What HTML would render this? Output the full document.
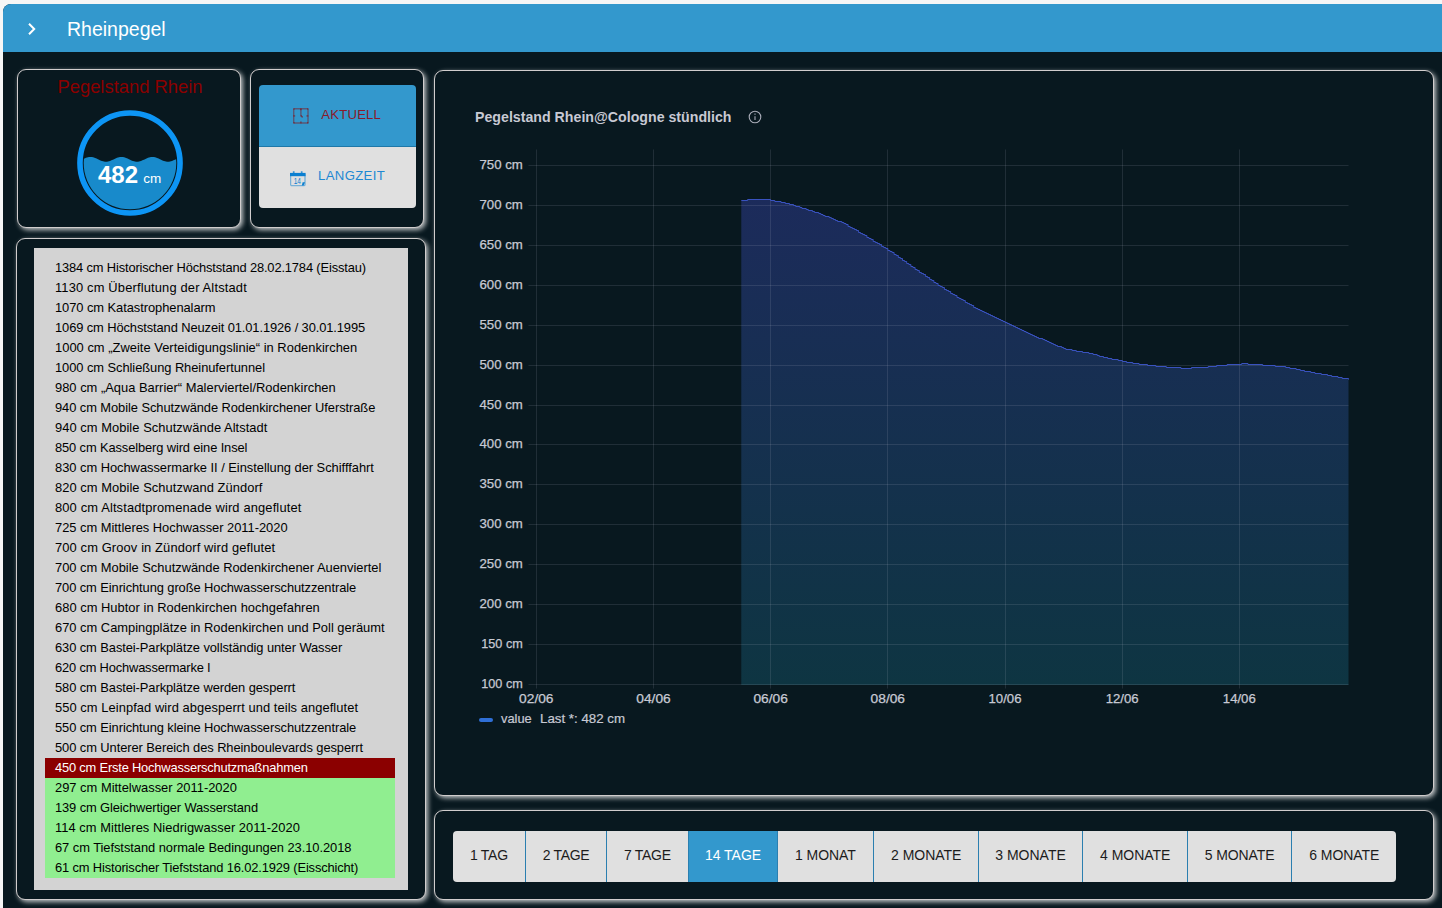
<!DOCTYPE html>
<html lang="de"><head><meta charset="utf-8"><title>Rheinpegel</title>
<style>
html,body{margin:0;padding:0}
body{width:1442px;height:908px;overflow:hidden;background:#f6f6f6;position:relative;font-family:"Liberation Sans",sans-serif}
.app{position:absolute;left:3px;top:4px;width:1445px;height:910px;background:#08181f;border-top-left-radius:8px;overflow:hidden}
.hdr{position:absolute;left:0;top:0;right:0;height:48px;background:#3398cd}
.hdr .t{position:absolute;left:64px;top:0;line-height:50px;color:#fff;font-size:19.5px}
.panel{position:absolute;box-sizing:border-box;border:1px solid #d1cdcd;border-radius:9px;background:#08181f;box-shadow:2px 2px 5px rgba(255,255,255,.75)}
.pt{position:absolute;left:2px;right:0;top:5px;text-align:center;color:#8b0000;font-size:18.4px;line-height:24px}
.list{position:absolute;left:17px;top:9px;width:374.4px;height:642px;background:#d3d3d3;font-size:12.9px;line-height:20px;color:#000}
.list div{margin:0 13px 0 11px;padding-left:10px;height:20px;white-space:nowrap}
.list div:first-child{margin-top:10px}
.list .r{background:#8b0000;color:#fff}
.list .g{background:#90ee90}
.chart{position:absolute;left:-1px;top:-1px}
.ax{font-size:12.4px;stroke:#c7c9d3;stroke-width:.25px;fill:#c7c9d3;font-family:"Liberation Sans",sans-serif}
.lg{font-size:12.4px;stroke:#c7c9d3;stroke-width:.2px;fill:#c7c9d3;font-family:"Liberation Sans",sans-serif}
.ttl{font-size:14px;font-weight:bold;fill:#c7c9d3;font-family:"Liberation Sans",sans-serif}
.tb{position:absolute;top:20px;height:51px;line-height:48.5px;box-sizing:border-box;background:#e0e0e0;color:#1c1c1c;text-align:left;font-size:14px;border-left:1px solid #2b7fb0;white-space:nowrap}
.tb.first{border-left:none;border-radius:4px 0 0 4px}
.tb.last{border-radius:0 4px 4px 0}
.tb.act{background:#3398cd;color:#fff}
.vb{position:absolute;left:8px;width:157px;box-sizing:border-box;font-size:13.2px;white-space:nowrap}
.vb span{position:absolute}
</style></head><body>
<div class="app">
<div class="hdr"><svg style="position:absolute;left:20.7px;top:17px" width="16" height="16" viewBox="0 0 16 16"><path d="M5,2.8L10.2,8L5,13.2" fill="none" stroke="#fff" stroke-width="2"/></svg><div class="t">Rheinpegel</div></div>
</div>

<div class="panel" style="left:17px;top:69px;width:224px;height:159px">
<div class="pt">Pegelstand Rhein</div>
<svg style="position:absolute;left:57.1px;top:37.8px" width="110" height="110" viewBox="-55 -55 110 110">
<defs><clipPath id="cc"><circle r="46.3"/></clipPath></defs>
<circle r="50.05" fill="none" stroke="#0d95f5" stroke-width="5.6"/>
<path clip-path="url(#cc)" d="M-50,-2.45L-49,-2.88L-48,-3.34L-47,-3.82L-46,-4.29L-45,-4.73L-44,-5.13L-43,-5.46L-42,-5.73L-41,-5.91L-40,-5.99L-39,-5.98L-38,-5.88L-37,-5.68L-36,-5.40L-35,-5.05L-34,-4.64L-33,-4.19L-32,-3.72L-31,-3.25L-30,-2.79L-29,-2.37L-28,-2.00L-27,-1.69L-26,-1.47L-25,-1.34L-24,-1.30L-23,-1.36L-22,-1.51L-21,-1.75L-20,-2.07L-19,-2.45L-18,-2.88L-17,-3.34L-16,-3.82L-15,-4.29L-14,-4.73L-13,-5.13L-12,-5.46L-11,-5.73L-10,-5.91L-9,-5.99L-8,-5.98L-7,-5.88L-6,-5.68L-5,-5.40L-4,-5.05L-3,-4.64L-2,-4.19L-1,-3.72L0,-3.25L1,-2.79L2,-2.37L3,-2.00L4,-1.69L5,-1.47L6,-1.34L7,-1.30L8,-1.36L9,-1.51L10,-1.75L11,-2.07L12,-2.45L13,-2.88L14,-3.34L15,-3.82L16,-4.29L17,-4.73L18,-5.13L19,-5.46L20,-5.73L21,-5.91L22,-5.99L23,-5.98L24,-5.88L25,-5.68L26,-5.40L27,-5.05L28,-4.64L29,-4.19L30,-3.72L31,-3.25L32,-2.79L33,-2.37L34,-2.00L35,-1.69L36,-1.47L37,-1.34L38,-1.30L39,-1.36L40,-1.51L41,-1.75L42,-2.07L43,-2.45L44,-2.88L45,-3.34L46,-3.82L47,-4.29L48,-4.73L49,-5.13L50,-5.46V50H-50Z" fill="#188acb"/>
<text x="-12" y="20.2" text-anchor="middle" font-size="24" font-weight="bold" fill="#fff" font-family="Liberation Sans, sans-serif">482</text>
<text x="22.2" y="20.2" text-anchor="middle" font-size="13.5" fill="#fff" font-family="Liberation Sans, sans-serif">cm</text>
</svg>
</div>

<div class="panel" style="left:250px;top:69px;width:174px;height:159px">
<div class="vb" style="top:15px;height:62px;background:#3398cd;color:#8b1a2b;border-radius:4px 4px 0 0;border-bottom:1px solid #1f78a8"><svg style="position:absolute;left:34.2px;top:23.2px" width="16" height="16" viewBox="0 0 16 16"><g fill="none" stroke="rgba(139,0,0,.42)" stroke-width="1.4"><rect x="0.7" y="0.7" width="14.3" height="14.3" rx="0.8"/><path d="M7.9,1V7.6L9.4,9.1"/></g><g fill="rgba(139,0,0,.45)"><rect x="0.2" y="0.2" width="1.5" height="1.5"/><rect x="14" y="0.2" width="1.5" height="1.5"/><rect x="0.2" y="14" width="1.5" height="1.5"/><rect x="14" y="14" width="1.5" height="1.5"/><rect x="7.1" y="0.2" width="1.6" height="2"/><rect x="7.1" y="13.4" width="1.6" height="2"/><rect x="0.2" y="7.1" width="2" height="1.6"/><rect x="13.4" y="7.1" width="2" height="1.6"/><circle cx="8.2" cy="7.9" r=".8"/><circle cx="9.3" cy="9" r=".8"/></g></svg><span style="left:62.3px;top:21.6px;line-height:16px;letter-spacing:.17px">AKTUELL</span></div>
<div class="vb" style="top:77px;height:61px;background:#e0e0e0;color:#1e88d2;border-radius:0 0 4px 4px"><svg style="position:absolute;left:31.3px;top:24px" width="16" height="16" viewBox="0 0 16 16"><rect x="0.6" y="3" width="14.4" height="11.6" rx="1.2" fill="none" stroke="rgba(11,127,208,.5)" stroke-width="1.3"/><path d="M0,1.9H15.6V5.2H0Z" fill="#0b7fd0"/><path d="M3.7,0.2V2.2M11.7,0.2V2.2" stroke="#0b7fd0" stroke-width="1.7" fill="none" opacity=".8"/><path d="M15,11.2H12.6L11.8,14.4H13.6Z" fill="#0b7fd0"/><text x="7.3" y="13.3" font-size="8.6" text-anchor="middle" fill="#0b7fd0" font-family="Liberation Sans, sans-serif" textLength="7.2" lengthAdjust="spacingAndGlyphs">14</text></svg><span style="left:59px;top:21.4px;line-height:16px;letter-spacing:.33px">LANGZEIT</span></div>
</div>

<div class="panel" style="left:16px;top:238px;width:410px;height:662px">
<div class="list">
<div style="letter-spacing:-0.151px">1384 cm Historischer Höchststand 28.02.1784 (Eisstau)</div>
<div style="letter-spacing:0.159px">1130 cm Überflutung der Altstadt</div>
<div style="letter-spacing:-0.061px">1070 cm Katastrophenalarm</div>
<div style="letter-spacing:-0.103px">1069 cm Höchststand Neuzeit 01.01.1926 / 30.01.1995</div>
<div style="letter-spacing:0.025px">1000 cm „Zweite Verteidigungslinie“ in Rodenkirchen</div>
<div style="letter-spacing:-0.064px">1000 cm Schließung Rheinufertunnel</div>
<div style="letter-spacing:0.012px">980 cm „Aqua Barrier“ Malerviertel/Rodenkirchen</div>
<div style="letter-spacing:-0.071px">940 cm Mobile Schutzwände Rodenkirchener Uferstraße</div>
<div style="letter-spacing:0.052px">940 cm Mobile Schutzwände Altstadt</div>
<div style="letter-spacing:-0.123px">850 cm Kasselberg wird eine Insel</div>
<div style="letter-spacing:-0.030px">830 cm Hochwassermarke II / Einstellung der Schifffahrt</div>
<div style="letter-spacing:0.054px">820 cm Mobile Schutzwand Zündorf</div>
<div style="letter-spacing:0.142px">800 cm Altstadtpromenade wird angeflutet</div>
<div style="letter-spacing:-0.021px">725 cm Mittleres Hochwasser 2011-2020</div>
<div style="letter-spacing:0.123px">700 cm Groov in Zündorf wird geflutet</div>
<div style="letter-spacing:-0.009px">700 cm Mobile Schutzwände Rodenkirchener Auenviertel</div>
<div style="letter-spacing:-0.084px">700 cm Einrichtung große Hochwasserschutzzentrale</div>
<div style="letter-spacing:0.026px">680 cm Hubtor in Rodenkirchen hochgefahren</div>
<div style="letter-spacing:-0.000px">670 cm Campingplätze in Rodenkirchen und Poll geräumt</div>
<div style="letter-spacing:-0.082px">630 cm Bastei-Parkplätze vollständig unter Wasser</div>
<div style="letter-spacing:-0.177px">620 cm Hochwassermarke I</div>
<div style="letter-spacing:-0.082px">580 cm Bastei-Parkplätze werden gesperrt</div>
<div style="letter-spacing:0.068px">550 cm Leinpfad wird abgesperrt und teils angeflutet</div>
<div style="letter-spacing:-0.082px">550 cm Einrichtung kleine Hochwasserschutzzentrale</div>
<div style="letter-spacing:-0.072px">500 cm Unterer Bereich des Rheinboulevards gesperrt</div>
<div class="r" style="letter-spacing:-0.194px">450 cm Erste Hochwasserschutzmaßnahmen</div>
<div class="g" style="letter-spacing:0.005px">297 cm Mittelwasser 2011-2020</div>
<div class="g" style="letter-spacing:-0.109px">139 cm Gleichwertiger Wasserstand</div>
<div class="g" style="letter-spacing:0.046px">114 cm Mittleres Niedrigwasser 2011-2020</div>
<div class="g" style="letter-spacing:-0.050px">67 cm Tiefststand normale Bedingungen 23.10.2018</div>
<div class="g" style="letter-spacing:-0.144px">61 cm Historischer Tiefststand 16.02.1929 (Eisschicht)</div>
</div>
</div>

<div class="panel" style="left:434px;top:70px;width:1000px;height:726px">
<svg class="chart" width="1000" height="725" viewBox="434 70 1000 725">
<defs><linearGradient id="g" gradientUnits="userSpaceOnUse" x1="0" y1="199" x2="0" y2="685"><stop offset="0" stop-color="#1c2b5b"/><stop offset="1" stop-color="#0e3542"/></linearGradient></defs>
<path d="M741.3,200.5H747.6V199.5H770.6V200.5H774.8V201.5H781.1V202.5H785.3V203.5H789.5V204.5H793.6V205.5H795.7V206.5H799.9V207.5H802.0V208.5H806.2V209.5H808.3V210.5H812.5V211.5H814.6V212.5H818.8V213.5H820.9V214.5H823.0V215.5H825.1V216.5H829.2V217.5H831.3V218.5H833.4V219.5H835.5V220.5H837.6V221.5H841.8V222.5H843.9V223.5H846.0V224.5H848.1V226.5H850.2V227.5H852.3V228.5H854.4V229.5H856.5V230.5H858.6V232.5H860.6V233.5H862.7V234.5H864.8V235.5H866.9V237.5H869.0V238.5H871.1V239.5H873.2V241.5H875.3V242.5H877.4V243.5H879.5V244.5H881.6V246.5H883.7V247.5H885.8V248.5H887.9V250.5H890.0V251.5H892.1V252.5H894.1V254.5H896.2V255.5H898.3V257.5H900.4V258.5H902.5V260.5H904.6V261.5H906.7V263.5H908.8V264.5H910.9V266.5H913.0V267.5H915.1V269.5H917.2V270.5H919.3V272.5H921.4V273.5H923.5V274.5H925.6V276.5H927.6V277.5H929.7V279.5H931.8V280.5H933.9V282.5H936.0V283.5H938.1V285.5H940.2V286.5H942.3V287.5H944.4V289.5H946.5V290.5H948.6V291.5H950.7V293.5H952.8V294.5H954.9V295.5H957.0V297.5H959.1V298.5H961.1V299.5H963.2V300.5H965.3V302.5H967.4V303.5H969.5V304.5H971.6V305.5H973.7V307.5H975.8V308.5H977.9V309.5H980.0V310.5H982.1V311.5H984.2V312.5H986.3V313.5H988.4V314.5H990.5V315.5H992.6V316.5H994.6V317.5H996.7V318.5H998.8V319.5H1000.9V320.5H1003.0V321.5H1005.1V322.5H1007.2V323.5H1009.3V324.5H1011.4V325.5H1013.5V326.5H1015.6V327.5H1017.7V328.5H1019.8V329.5H1021.9V330.5H1024.0V331.5H1026.1V332.5H1028.1V333.5H1030.2V334.5H1032.3V335.5H1034.4V336.5H1036.5V337.5H1038.6V338.5H1042.8V339.5H1044.9V340.5H1047.0V341.5H1049.1V342.5H1051.2V343.5H1053.3V344.5H1055.4V345.5H1057.5V346.5H1061.7V347.5H1063.7V348.5H1065.8V349.5H1072.1V350.5H1076.3V351.5H1082.6V352.5H1088.9V353.5H1093.1V354.5H1097.2V355.5H1099.3V356.5H1103.5V357.5H1107.7V358.5H1111.9V359.5H1118.2V360.5H1122.4V361.5H1126.6V362.5H1132.8V363.5H1139.1V364.5H1147.5V365.5H1155.9V366.5H1166.3V367.5H1181.0V368.5H1191.5V367.5H1208.2V366.5H1216.6V365.5H1227.1V364.5H1241.7V363.5H1248.0V364.5H1262.7V365.5H1275.2V366.5H1285.7V367.5H1289.9V368.5H1296.2V369.5H1300.3V370.5H1304.5V371.5H1310.8V372.5H1315.0V373.5H1321.3V374.5H1327.6V375.5H1331.7V376.5H1338.0V377.5H1342.2V378.5H1348.5V379.5H1348.5V685H741.3Z" fill="url(#g)"/>
<path d="M528.5,684.5H1348.5M528.5,644.5H1348.5M528.5,604.5H1348.5M528.5,564.5H1348.5M528.5,524.5H1348.5M528.5,484.5H1348.5M528.5,444.5H1348.5M528.5,405.5H1348.5M528.5,365.5H1348.5M528.5,325.5H1348.5M528.5,285.5H1348.5M528.5,245.5H1348.5M528.5,205.5H1348.5M528.5,165.5H1348.5M536.5,149.5V688.5M653.5,149.5V688.5M770.5,149.5V688.5M887.5,149.5V688.5M1005.5,149.5V688.5M1122.5,149.5V688.5M1239.5,149.5V688.5" stroke="rgba(204,204,220,0.13)" stroke-width="1" fill="none"/>
<path d="M741.3,200.5H747.6V199.5H770.6V200.5H774.8V201.5H781.1V202.5H785.3V203.5H789.5V204.5H793.6V205.5H795.7V206.5H799.9V207.5H802.0V208.5H806.2V209.5H808.3V210.5H812.5V211.5H814.6V212.5H818.8V213.5H820.9V214.5H823.0V215.5H825.1V216.5H829.2V217.5H831.3V218.5H833.4V219.5H835.5V220.5H837.6V221.5H841.8V222.5H843.9V223.5H846.0V224.5H848.1V226.5H850.2V227.5H852.3V228.5H854.4V229.5H856.5V230.5H858.6V232.5H860.6V233.5H862.7V234.5H864.8V235.5H866.9V237.5H869.0V238.5H871.1V239.5H873.2V241.5H875.3V242.5H877.4V243.5H879.5V244.5H881.6V246.5H883.7V247.5H885.8V248.5H887.9V250.5H890.0V251.5H892.1V252.5H894.1V254.5H896.2V255.5H898.3V257.5H900.4V258.5H902.5V260.5H904.6V261.5H906.7V263.5H908.8V264.5H910.9V266.5H913.0V267.5H915.1V269.5H917.2V270.5H919.3V272.5H921.4V273.5H923.5V274.5H925.6V276.5H927.6V277.5H929.7V279.5H931.8V280.5H933.9V282.5H936.0V283.5H938.1V285.5H940.2V286.5H942.3V287.5H944.4V289.5H946.5V290.5H948.6V291.5H950.7V293.5H952.8V294.5H954.9V295.5H957.0V297.5H959.1V298.5H961.1V299.5H963.2V300.5H965.3V302.5H967.4V303.5H969.5V304.5H971.6V305.5H973.7V307.5H975.8V308.5H977.9V309.5H980.0V310.5H982.1V311.5H984.2V312.5H986.3V313.5H988.4V314.5H990.5V315.5H992.6V316.5H994.6V317.5H996.7V318.5H998.8V319.5H1000.9V320.5H1003.0V321.5H1005.1V322.5H1007.2V323.5H1009.3V324.5H1011.4V325.5H1013.5V326.5H1015.6V327.5H1017.7V328.5H1019.8V329.5H1021.9V330.5H1024.0V331.5H1026.1V332.5H1028.1V333.5H1030.2V334.5H1032.3V335.5H1034.4V336.5H1036.5V337.5H1038.6V338.5H1042.8V339.5H1044.9V340.5H1047.0V341.5H1049.1V342.5H1051.2V343.5H1053.3V344.5H1055.4V345.5H1057.5V346.5H1061.7V347.5H1063.7V348.5H1065.8V349.5H1072.1V350.5H1076.3V351.5H1082.6V352.5H1088.9V353.5H1093.1V354.5H1097.2V355.5H1099.3V356.5H1103.5V357.5H1107.7V358.5H1111.9V359.5H1118.2V360.5H1122.4V361.5H1126.6V362.5H1132.8V363.5H1139.1V364.5H1147.5V365.5H1155.9V366.5H1166.3V367.5H1181.0V368.5H1191.5V367.5H1208.2V366.5H1216.6V365.5H1227.1V364.5H1241.7V363.5H1248.0V364.5H1262.7V365.5H1275.2V366.5H1285.7V367.5H1289.9V368.5H1296.2V369.5H1300.3V370.5H1304.5V371.5H1310.8V372.5H1315.0V373.5H1321.3V374.5H1327.6V375.5H1331.7V376.5H1338.0V377.5H1342.2V378.5H1348.5V379.5H1348.5" stroke="#3e58cd" stroke-width="1" fill="none" stroke-opacity=".9"/>
<text class="ax" x="522.8" y="688.0" text-anchor="end" textLength="41.5" lengthAdjust="spacingAndGlyphs">100 cm</text>
<text class="ax" x="522.8" y="648.0" text-anchor="end" textLength="41.5" lengthAdjust="spacingAndGlyphs">150 cm</text>
<text class="ax" x="522.8" y="608.0" text-anchor="end" textLength="43.3" lengthAdjust="spacingAndGlyphs">200 cm</text>
<text class="ax" x="522.8" y="568.0" text-anchor="end" textLength="43.3" lengthAdjust="spacingAndGlyphs">250 cm</text>
<text class="ax" x="522.8" y="528.0" text-anchor="end" textLength="43.3" lengthAdjust="spacingAndGlyphs">300 cm</text>
<text class="ax" x="522.8" y="488.0" text-anchor="end" textLength="43.3" lengthAdjust="spacingAndGlyphs">350 cm</text>
<text class="ax" x="522.8" y="448.0" text-anchor="end" textLength="43.3" lengthAdjust="spacingAndGlyphs">400 cm</text>
<text class="ax" x="522.8" y="409.0" text-anchor="end" textLength="43.3" lengthAdjust="spacingAndGlyphs">450 cm</text>
<text class="ax" x="522.8" y="369.0" text-anchor="end" textLength="43.3" lengthAdjust="spacingAndGlyphs">500 cm</text>
<text class="ax" x="522.8" y="329.0" text-anchor="end" textLength="43.3" lengthAdjust="spacingAndGlyphs">550 cm</text>
<text class="ax" x="522.8" y="289.0" text-anchor="end" textLength="43.3" lengthAdjust="spacingAndGlyphs">600 cm</text>
<text class="ax" x="522.8" y="249.0" text-anchor="end" textLength="43.3" lengthAdjust="spacingAndGlyphs">650 cm</text>
<text class="ax" x="522.8" y="209.0" text-anchor="end" textLength="43.3" lengthAdjust="spacingAndGlyphs">700 cm</text>
<text class="ax" x="522.8" y="169.0" text-anchor="end" textLength="43.3" lengthAdjust="spacingAndGlyphs">750 cm</text>
<text class="ax" x="536.3" y="703.2" text-anchor="middle" textLength="34.4" lengthAdjust="spacingAndGlyphs">02/06</text>
<text class="ax" x="653.5" y="703.2" text-anchor="middle" textLength="34.4" lengthAdjust="spacingAndGlyphs">04/06</text>
<text class="ax" x="770.6" y="703.2" text-anchor="middle" textLength="34.4" lengthAdjust="spacingAndGlyphs">06/06</text>
<text class="ax" x="887.8" y="703.2" text-anchor="middle" textLength="34.4" lengthAdjust="spacingAndGlyphs">08/06</text>
<text class="ax" x="1005.0" y="703.2" text-anchor="middle" textLength="33" lengthAdjust="spacingAndGlyphs">10/06</text>
<text class="ax" x="1122.2" y="703.2" text-anchor="middle" textLength="33" lengthAdjust="spacingAndGlyphs">12/06</text>
<text class="ax" x="1239.3" y="703.2" text-anchor="middle" textLength="33" lengthAdjust="spacingAndGlyphs">14/06</text>
<text class="ttl" x="475" y="122" textLength="256.5" lengthAdjust="spacingAndGlyphs">Pegelstand Rhein@Cologne stündlich</text>
<g fill="none" stroke="#a9acb8" stroke-width="1.1"><circle cx="755" cy="117" r="5.8"/><path d="M755,116.2V120M755,113.6V114.7"/></g>
<rect x="479" y="718" width="14" height="4" rx="2" fill="#2f6fd6"/>
<text class="lg" x="501" y="723" textLength="30.7" lengthAdjust="spacingAndGlyphs">value</text><text class="lg" x="540" y="723" textLength="85" lengthAdjust="spacingAndGlyphs">Last *: 482 cm</text>
</svg>
</div>

<div class="panel" style="left:434px;top:810px;width:1000px;height:90px">
<div class="tb first" style="left:18.0px;width:72.0px;padding-left:16.9px;letter-spacing:-0.243px">1 TAG</div>
<div class="tb" style="left:90.0px;width:81.0px;padding-left:16.8px;letter-spacing:-0.343px">2 TAGE</div>
<div class="tb" style="left:171.0px;width:82.0px;padding-left:16.9px;letter-spacing:-0.283px">7 TAGE</div>
<div class="tb act" style="left:253.0px;width:89.0px;padding-left:16.0px;letter-spacing:-0.033px">14 TAGE</div>
<div class="tb" style="left:342.0px;width:96.0px;padding-left:17.1px;letter-spacing:-0.084px">1 MONAT</div>
<div class="tb" style="left:438.0px;width:105.0px;padding-left:17.1px;letter-spacing:-0.047px">2 MONATE</div>
<div class="tb" style="left:543.0px;width:104.0px;padding-left:16.2px;letter-spacing:0.010px">3 MONATE</div>
<div class="tb" style="left:647.0px;width:105.0px;padding-left:17.1px;letter-spacing:-0.033px">4 MONATE</div>
<div class="tb" style="left:752.0px;width:104.0px;padding-left:16.7px;letter-spacing:-0.104px">5 MONATE</div>
<div class="tb last" style="left:856.0px;width:105.0px;padding-left:17.2px;letter-spacing:-0.047px">6 MONATE</div>
</div>
</body></html>
